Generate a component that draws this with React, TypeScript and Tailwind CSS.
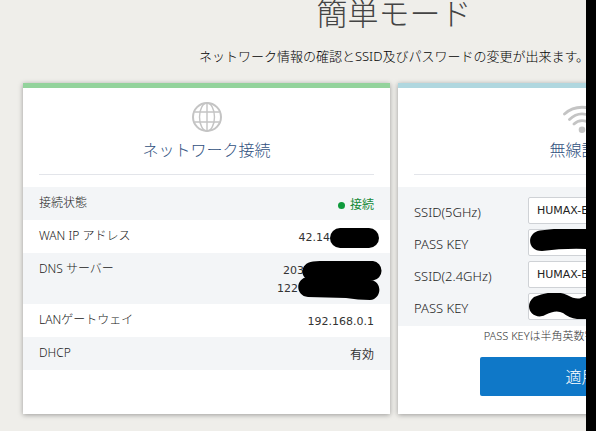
import React, { useState } from "react";

type CardProps = {
  title: string;
  accent: string;
  icon: React.ReactNode;
  children: React.ReactNode;
};

function GlobeIcon() {
  return (
    <svg width="30" height="30" viewBox="0 0 30 30" fill="none" stroke="#c4c4c4" aria-hidden>
      <circle cx="15" cy="15" r="14" strokeWidth="2" />
      <ellipse cx="15" cy="15" rx="7.5" ry="14" strokeWidth="1.4" />
      <path d="M15 1v28M2.5 10h25M2.5 20h25" strokeWidth="1.4" />
    </svg>
  );
}

function WifiIcon() {
  return (
    <svg
      className="overflow-visible"
      width="40"
      height="30"
      viewBox="0 0 40 30"
      fill="none"
      stroke="#c4c4c4"
      strokeWidth="2.8"
      strokeLinecap="round"
      aria-hidden
    >
      <path d="M2.5 12C12.5 3 27.5 3 37.5 12" />
      <path d="M7.5 17.5C15 10 25 10 32.5 17.5" />
      <path d="M12 22C16.5 17.5 23.5 17.5 28 22" />
      <circle cx="20" cy="27.8" r="3.3" fill="#c4c4c4" stroke="none" />
    </svg>
  );
}

function Card({ title, accent, icon, children }: CardProps) {
  return (
    <section className={`bg-white border-t-[5px] ${accent} shadow-[0_1px_5px_rgba(0,0,0,0.35)]`}>
      <div className="mx-4 mb-3 flex flex-col items-center border-b border-[#e3e5ea] pt-3.5 pb-3">
        {icon}
        <h2 className="mt-1.5 text-base leading-6 font-light text-[#2f5080]">{title}</h2>
      </div>
      {children}
    </section>
  );
}

function NetworkTable() {
  const th = "pt-[7px] pl-4 text-left align-top text-xs leading-[18px] font-light text-[#222]";
  const td = "pt-[9px] pr-4 pb-1.5 align-top text-[11px] leading-[18px] text-[#333]";
  const digits = "font-['DejaVu_Sans','Noto_Sans_CJK_JP',sans-serif]";

  return (
    <table className="mb-11 w-full">
      <tbody>
        <tr className="bg-[#f3f5f7]">
          <th scope="row" className={th}>接続状態</th>
          <td className={td}>
            <div className="flex items-center justify-end gap-[5px] text-xs leading-[18px] text-[#168a3a]">
              <span className="size-[7px] rounded-full bg-[#0f9a3c]" />
              接続
            </div>
          </td>
        </tr>
        <tr>
          <th scope="row" className={th}>WAN IP アドレス</th>
          <td className={td}>
            <div className={`flex h-[18px] items-center justify-end ${digits}`}>
              <span>42.14</span>
              <svg className="-mr-[5px] shrink-0" width="49" height="20" viewBox="0 0 49 20" aria-hidden>
                <rect width="49" height="20" rx="10" />
              </svg>
            </div>
          </td>
        </tr>
        <tr className="bg-[#f3f5f7]">
          <th scope="row" className={th}>DNS サーバー</th>
          <td className={td}>
            <div className={`flex h-[18px] items-center justify-end ${digits}`}>
              <span>203</span>
              <svg className="-mr-2 -ml-0.5 shrink-0" width="80" height="20" viewBox="0 0 80 20" aria-hidden>
                <path d="M11 .5Q20-.5 35 0H71A9.5 9.8 0 0 1 71 19.5H10C-3 19-3 2 11 .5Z" />
              </svg>
            </div>
            <div className={`flex h-[18px] items-center justify-end ${digits}`}>
              <span>122</span>
              <svg className="-mr-1.5 shrink-0" width="82" height="24" viewBox="0 0 82 24" aria-hidden>
                <path d="M10 0L72 3C85 4 84 22 72 23Q60 23 48 21L10 20C-3 19-3 1 10 0Z" />
              </svg>
            </div>
          </td>
        </tr>
        <tr>
          <th scope="row" className={th}>LANゲートウェイ</th>
          <td className={`${td} ${digits} text-right`}>192.168.0.1</td>
        </tr>
        <tr className="bg-[#f3f5f7]">
          <th scope="row" className={th}>DHCP</th>
          <td className={`${td} text-right`}>
            <div className="text-xs leading-[18px]">有効</div>
          </td>
        </tr>
      </tbody>
    </table>
  );
}

type FieldProps = {
  id: string;
  label: string;
  value: string;
  onChange: (value: string) => void;
  children?: React.ReactNode;
};

function Field({ id, label, value, onChange, children }: FieldProps) {
  return (
    <div className="flex items-center">
      <label htmlFor={id} className="w-[114px] shrink-0 pt-0.5 text-[13px] leading-5 font-light text-[#222]">
        {label}
      </label>
      <div className="relative flex-1">
        <input
          id={id}
          value={value}
          onChange={(e) => onChange(e.target.value)}
          className="block h-[27px] w-full rounded-xs border border-[#cfd2d6] bg-white px-2 font-['DejaVu_Sans',sans-serif] text-[11px] text-[#222]"
        />
        {children}
      </div>
    </div>
  );
}

function WirelessForm() {
  const [ssid5, setSsid5] = useState("HUMAX-E");
  const [key5, setKey5] = useState("");
  const [ssid24, setSsid24] = useState("HUMAX-E");
  const [key24, setKey24] = useState("");

  return (
    <form onSubmit={(e) => e.preventDefault()}>
      <div className="flex flex-col gap-[5px] bg-[#f3f5f7] px-4 pt-2.5 pb-1.5">
        <Field id="ssid5" label="SSID(5GHz)" value={ssid5} onChange={setSsid5} />
        <Field id="key5" label="PASS KEY" value={key5} onChange={setKey5}>
          <svg className="absolute top-0 left-0" width="80" height="27" viewBox="0 0 80 27" aria-hidden>
            <path d="M12 1.5Q38-2 60 0V20Q36 19 14 22C-1 22-2 4 12 1.5Z" />
          </svg>
        </Field>
        <Field id="ssid24" label="SSID(2.4GHz)" value={ssid24} onChange={setSsid24} />
        <Field id="key24" label="PASS KEY" value={key24} onChange={setKey24}>
          <svg className="absolute top-0 left-0" width="80" height="27" viewBox="0 0 80 27" aria-hidden>
            <path d="M6 4Q26-4 39 2Q48 7 53 5Q60 1 66 4V26H49Q41 25 35 20Q28 16 17 22C6 28-6 14 6 4Z" />
          </svg>
        </Field>
      </div>
      <p className="mx-auto mt-0.5 w-fit text-[11px] leading-4 font-light text-[#333]">
        PASS KEYは半角英数字8～63文字です。
      </p>
      <button
        type="submit"
        className="mx-auto mt-[13px] mb-[18px] block h-[39px] w-[203px] rounded-xs bg-[#0f78c8] text-base font-light text-white"
      >
        適用
      </button>
    </form>
  );
}

export default function App() {
  return (
    <div className="flex min-h-screen bg-[#efeeea] font-['Noto_Sans','Noto_Sans_CJK_JP',sans-serif]">
      <main className="min-w-0 flex-1 overflow-hidden">
        <div className="min-w-[788px] px-[23px] pb-4">
          <h1 className="mx-auto w-fit text-[31px] leading-[26px] font-light text-[#444]">簡単モード</h1>
          <p className="mx-auto mt-5 mb-[17px] w-fit text-[13px] leading-5 font-light text-black">
            ネットワーク情報の確認とSSID及びパスワードの変更が出来ます。
          </p>

          <div className="grid grid-cols-2 gap-2">
            <Card title="ネットワーク接続" accent="border-[#93d39c]" icon={<GlobeIcon />}>
              <NetworkTable />
            </Card>
            <Card title="無線設定" accent="border-[#b0d7df]" icon={<WifiIcon />}>
              <WirelessForm />
            </Card>
          </div>
        </div>
      </main>

      {/* Right edge */}
      <div className="w-2.5 shrink-0 bg-black" />
    </div>
  );
}
